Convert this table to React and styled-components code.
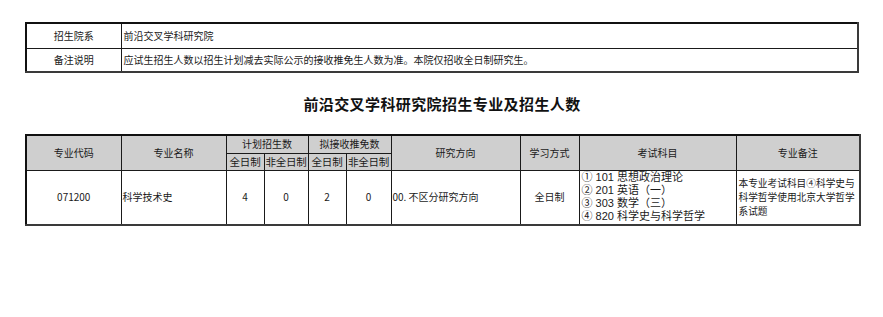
import styled, { createGlobalStyle } from "styled-components";

const GlobalStyle = createGlobalStyle`
  body {
    margin: 0;
    background: #ffffff;
    font-family: "Noto Sans CJK SC", "Noto Sans", sans-serif;
    color: #1a1a1a;
  }
`;

const Page = styled.div`
  width: 883px;
  height: 317px;
  box-sizing: border-box;
  padding: 22px 0 0 25px;
`;

const Grid = styled.table`
  border-collapse: collapse;
  table-layout: fixed;
  width: 834px;
  font-size: 10px;
  line-height: 12px;
  border: 2px solid #3a3a3a;
  border-top-color: #111;
  border-left-color: #111;

  td,
  th {
    border: 1px solid #1a1a1a;
    padding: 0;
    font-weight: normal;
    overflow: hidden;
  }
`;

const InfoRow = styled.tr`
  height: ${(p) => p.$h}px;
`;

const Label = styled.td`
  text-align: center;
`;

const Value = styled.td`
  text-align: left;
  padding-left: 2px !important;
`;

const Title = styled.h1`
  margin: 0;
  width: 834px;
  height: 61px;
  display: flex;
  align-items: center;
  justify-content: center;
  font-size: 15px;
  font-weight: bold;
  letter-spacing: 0.4px;
  color: #111;
`;

const Head = styled.th`
  background: #cfcfcf;
  text-align: center;
  white-space: nowrap;
  font-size: ${(p) => (p.$sub ? "10.5px" : "10px")};
  letter-spacing: ${(p) => (p.$sub ? "-0.2px" : "0")};
`;

const Cell = styled.td`
  text-align: ${(p) => (p.$left ? "left" : "center")};
  padding-left: ${(p) => (p.$left ? "1px" : "0")} !important;
  vertical-align: middle;
`;

const ExamList = styled.div`
  font-family: "Liberation Sans", "Noto Sans CJK SC", sans-serif;
  font-size: 11px;
  line-height: 13.3px;
  padding-left: 1px;
  white-space: nowrap;
`;

const Note = styled.div`
  font-size: 9.7px;
  line-height: 14px;
  padding-left: 1px;
`;

const widths = [95, 105, 38, 44, 38, 45, 129, 59, 157, 124];

const exams = [
  "① 101 思想政治理论",
  "② 201 英语（一）",
  "③ 303 数学（三）",
  "④ 820 科学史与科学哲学",
];

export default function App() {
  return (
    <>
      <GlobalStyle />
      <Page>
        <Grid>
          <colgroup>
            <col style={{ width: 95 }} />
            <col />
          </colgroup>
          <tbody>
            <InfoRow $h={25}>
              <Label>招生院系</Label>
              <Value>前沿交叉学科研究院</Value>
            </InfoRow>
            <InfoRow $h={24}>
              <Label>备注说明</Label>
              <Value>
                应试生招生人数以招生计划减去实际公示的接收推免生人数为准。本院仅招收全日制研究生。
              </Value>
            </InfoRow>
          </tbody>
        </Grid>

        <Title>前沿交叉学科研究院招生专业及招生人数</Title>

        <Grid>
          <colgroup>
            {widths.map((w, i) => (
              <col key={i} style={{ width: w }} />
            ))}
          </colgroup>
          <thead>
            <InfoRow $h={18}>
              <Head rowSpan={2}>专业代码</Head>
              <Head rowSpan={2}>专业名称</Head>
              <Head colSpan={2}>计划招生数</Head>
              <Head colSpan={2}>拟接收推免数</Head>
              <Head rowSpan={2}>研究方向</Head>
              <Head rowSpan={2}>学习方式</Head>
              <Head rowSpan={2}>考试科目</Head>
              <Head rowSpan={2}>专业备注</Head>
            </InfoRow>
            <InfoRow $h={17}>
              <Head $sub>全日制</Head>
              <Head $sub>非全日制</Head>
              <Head $sub>全日制</Head>
              <Head $sub>非全日制</Head>
            </InfoRow>
          </thead>
          <tbody>
            <InfoRow $h={54}>
              <Cell>071200</Cell>
              <Cell $left>科学技术史</Cell>
              <Cell>4</Cell>
              <Cell>0</Cell>
              <Cell>2</Cell>
              <Cell>0</Cell>
              <Cell $left>00. 不区分研究方向</Cell>
              <Cell>全日制</Cell>
              <Cell $left>
                <ExamList>
                  {exams.map((e) => (
                    <div key={e}>{e}</div>
                  ))}
                </ExamList>
              </Cell>
              <Cell $left>
                <Note>本专业考试科目④科学史与科学哲学使用北京大学哲学系试题</Note>
              </Cell>
            </InfoRow>
          </tbody>
        </Grid>
      </Page>
    </>
  );
}
